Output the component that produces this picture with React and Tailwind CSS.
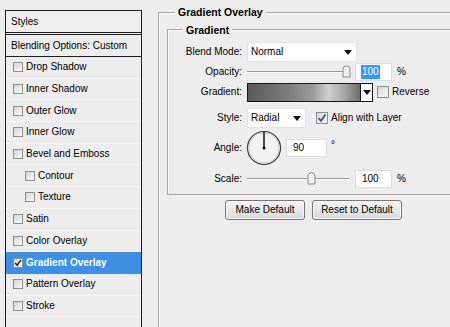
import React from "react";

const Check = ({ checked, small, blue }) => (
  <span
    className={`inline-flex items-center justify-center shrink-0 border border-[#8e8f8f] bg-gradient-to-br from-[#d4d4d4] to-[#fbfbfb] ${
      small ? "w-[10px] h-[10px]" : "w-[12px] h-[12px]"
    }`}
  >
    {checked && (
      <svg width={small ? 8 : 10} height={small ? 8 : 10} viewBox="0 0 10 10">
        <path
          d="M1.5 5 L4 7.8 L8.5 1.5"
          fill="none"
          stroke={blue ? "#2a4fa8" : "#222"}
          strokeWidth="1.8"
        />
      </svg>
    )}
  </span>
);

const Arrow = () => (
  <svg width="8" height="5" viewBox="0 0 8 5" className="shrink-0">
    <path d="M0 0 H8 L4 5 Z" fill="#111" />
  </svg>
);

const Thumb = () => (
  <svg width="9" height="13" viewBox="0 0 9 13" className="block">
    <path
      d="M1 4 Q1 0.8 4.5 0.8 Q8 0.8 8 4 V12 H1 Z"
      fill="#eeeeee"
      stroke="#8a8a8a"
      strokeWidth="1"
    />
  </svg>
);

const Slider = ({ pos }) => (
  <div className="relative w-[102px] h-[14px] flex items-center">
    <div className="w-full h-[2px] border-t border-[#9a9a9a] bg-white" />
    <div className="absolute top-0" style={{ left: pos }}>
      <Thumb />
    </div>
  </div>
);

const styleRows = [
  { label: "Drop Shadow" },
  { label: "Inner Shadow" },
  { label: "Outer Glow" },
  { label: "Inner Glow" },
  { label: "Bevel and Emboss" },
  { label: "Contour", indent: true },
  { label: "Texture", indent: true },
  { label: "Satin" },
  { label: "Color Overlay" },
  { label: "Gradient Overlay", active: true },
  { label: "Pattern Overlay" },
  { label: "Stroke" },
  { label: "" },
];

const Label = ({ children }) => (
  <div className="w-[79px] pr-[5px] text-right shrink-0">{children}</div>
);

const Button = ({ children, w }) => (
  <button
    className={`${w} h-[20px] rounded-[3px] border border-[#767676] bg-gradient-to-b from-[#f4f4f4] to-[#d9d9d9] text-[10px] text-black shadow-[inset_0_0_0_1px_#fafafa]`}
  >
    {children}
  </button>
);

export default function App() {
  return (
    <div className="w-[450px] h-[327px] overflow-hidden bg-[#ededed] flex font-['Liberation_Sans',Arial,sans-serif] text-[10px] text-black leading-none">
      {/* styles list */}
      <div className="ml-[5px] mt-[10px] w-[137px] border-l border-t border-r border-[#1e1e1e] flex flex-col shrink-0">
        <div className="h-[22px] shrink-0 flex items-center pl-[5px] border-b border-[#1e1e1e] bg-[#efefef]">
          Styles
        </div>
        <div className="h-[23px] shrink-0 mt-[1px] flex items-center pl-[5px] border-t border-b border-[#1e1e1e]">
          Blending Options: Custom
        </div>
        {styleRows.map((r, i) => (
          <div
            key={i}
            className={`h-[21.7px] shrink-0 flex items-center gap-[3px] border-b ${
              r.active
                ? "bg-[#3d8fe6] border-[#3d8fe6] text-white font-bold"
                : "border-[#f7f7f7]"
            } ${r.indent ? "pl-[19px]" : "pl-[7px]"}`}
          >
            {r.label && <Check small checked={r.active} />}
            {r.label}
          </div>
        ))}
      </div>

      {/* settings */}
      <fieldset className="ml-[16px] mt-[7px] w-[320px] border-l border-t border-[#a8a8a8] shadow-[inset_1px_1px_0_#fbfbfb] px-0 pb-0 min-w-0 shrink-0">
        <legend className="ml-[16px] px-[3px] font-bold text-[10.5px]">Gradient Overlay</legend>
        <fieldset className="ml-[8px] mt-[7px] border-l border-t border-b border-[#a8a8a8] shadow-[inset_1px_1px_0_#fbfbfb] px-0 pt-0 pb-[5px] min-w-0">
          <legend className="ml-[15px] px-[3px] font-bold text-[10.5px]">Gradient</legend>

          {/* blend mode */}
          <div className="flex items-center h-[20px] mt-[7px]">
            <Label>Blend Mode:</Label>
            <div className="w-[110px] h-[20px] bg-white border border-[#e2e2e2] flex items-center justify-between pl-[3px] pr-[4px]">
              <span>Normal</span>
              <Arrow />
            </div>
          </div>

          {/* opacity */}
          <div className="flex items-center h-[20px]">
            <Label>Opacity:</Label>
            <div className="flex items-center">
              <Slider pos={95} />
              <div className="ml-[6px] w-[37px] h-[18px] bg-white border border-[#dcdcdc] flex items-center pl-[5px]">
                <span className="bg-[#3399ff] text-white px-[1px] py-[2px]">100</span>
              </div>
              <span className="ml-[5px]">%</span>
            </div>
          </div>

          {/* gradient */}
          <div className="flex items-center h-[20px]">
            <Label>Gradient:</Label>
            <div className="flex items-center h-[19px] border border-[#151515]">
              <div className="w-[112px] h-full bg-[linear-gradient(to_right,#5a5a5a,#7c7c7c_35%,#9c9c9c_58%,#cfcfcf_72%,#a6a6a6_86%,#6c6c6c)]" />
              <div className="w-[12px] h-full bg-white border-l border-[#151515] flex items-center justify-center">
                <Arrow />
              </div>
            </div>
            <div className="ml-[4px] flex items-center gap-[3px]">
              <Check />
              <span>Reverse</span>
            </div>
          </div>

          {/* style */}
          <div className="flex items-center h-[20px] mt-[6px]">
            <Label>Style:</Label>
            <div className="w-[59px] max-w-[59px] flex-none h-[20px] bg-white border border-[#e2e2e2] flex items-center justify-between pl-[3px] pr-[4px]">
              <span>Radial</span>
              <Arrow />
            </div>
            <div className="ml-[10px] flex items-center gap-[3px]">
              <Check checked blue />
              <span>Align with Layer</span>
            </div>
          </div>

          {/* angle */}
          <div className="flex items-center h-[36px] mt-[2px]">
            <Label>Angle:</Label>
            <svg width="36" height="36" viewBox="0 0 36 36" className="-ml-[1px]">
              <circle cx="18" cy="18" r="16.5" fill="#f2f2f2" stroke="#3a3a3a" strokeWidth="1.2" />
              <circle cx="18" cy="18" r="15.3" fill="none" stroke="#c8c8c8" strokeWidth="1" />
              <line x1="18" y1="18" x2="18" y2="2" stroke="#111" strokeWidth="1.5" />
              <circle cx="18" cy="18" r="1.6" fill="#111" />
            </svg>
            <div className="ml-[4px] w-[41px] h-[18px] bg-white border border-[#dcdcdc] flex items-center pl-[6px]">
              90
            </div>
            <span className="ml-[4px] -mt-[6px] text-[10px]">°</span>
          </div>

          {/* scale */}
          <div className="flex items-center h-[20px] mt-[3px]">
            <Label>Scale:</Label>
            <div className="flex items-center">
              <Slider pos={60} />
              <div className="ml-[6px] w-[37px] h-[18px] bg-white border border-[#dcdcdc] flex items-center pl-[6px]">
                100
              </div>
              <span className="ml-[5px]">%</span>
            </div>
          </div>
        </fieldset>

        <div className="flex gap-[7px] pl-[66px] mt-[5px]">
          <Button w="w-[80px]">Make Default</Button>
          <Button w="w-[90px]">Reset to Default</Button>
        </div>
      </fieldset>
    </div>
  );
}
